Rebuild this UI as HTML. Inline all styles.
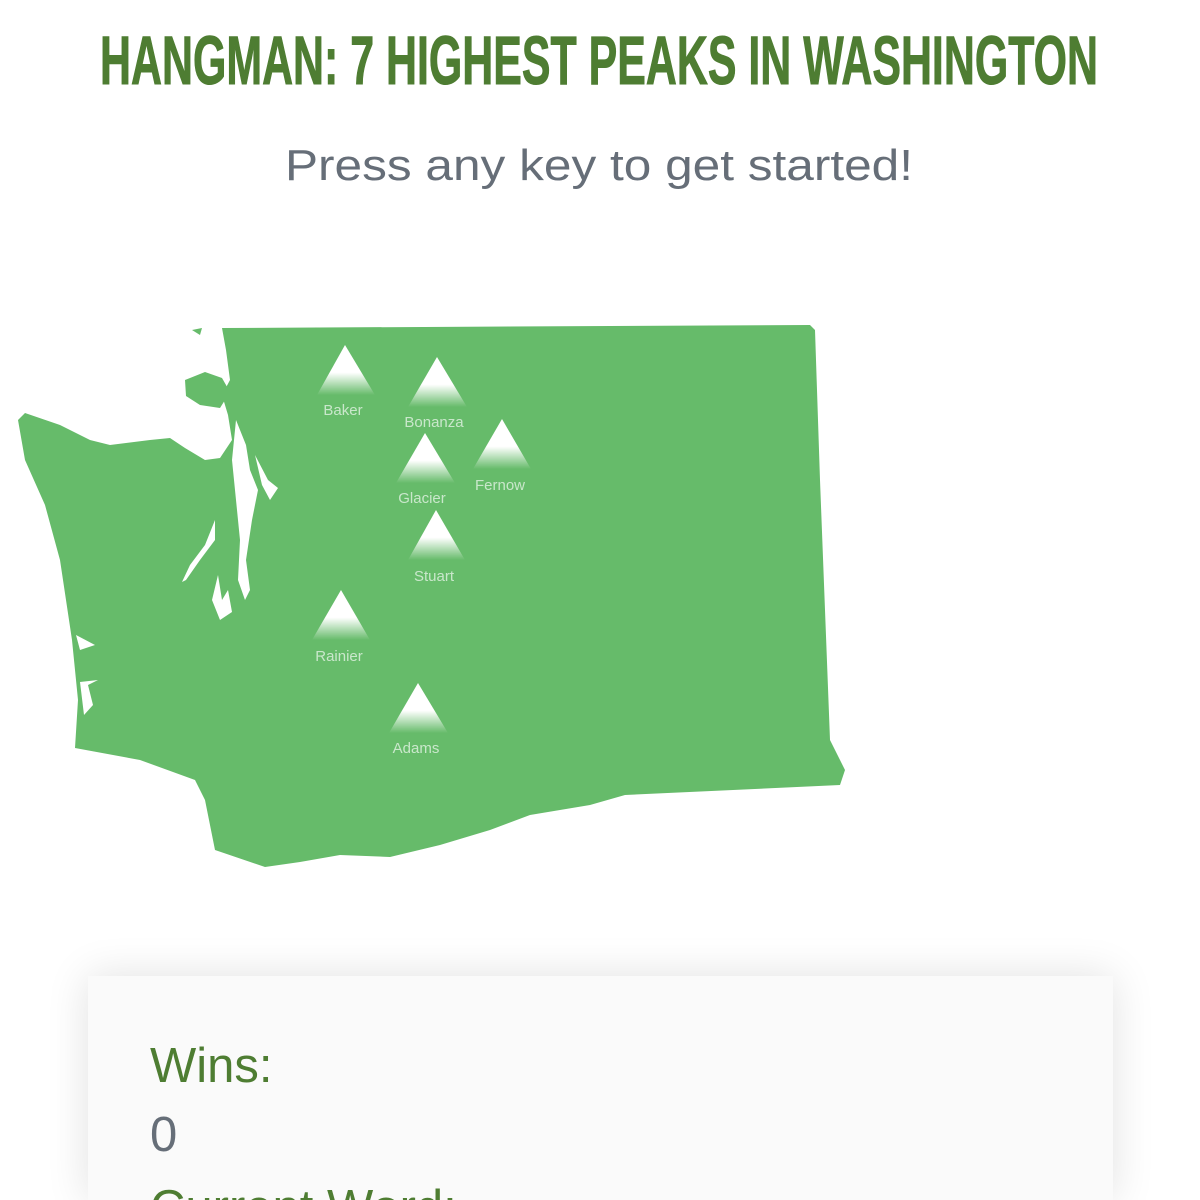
<!DOCTYPE html>
<html><head><meta charset="utf-8"><style>
html,body{margin:0;padding:0;background:#fff;width:1200px;height:1200px;overflow:hidden;font-family:"Liberation Sans",sans-serif;}
.card{position:absolute;left:88px;top:976px;width:1025px;height:224px;background:#fafafa;box-shadow:0 0 40px rgba(0,0,0,0.12);overflow:hidden;}
.t{position:absolute;left:62px;font-size:49px;margin:0;line-height:1;}
</style></head><body>
<svg width="1200" height="960" style="position:absolute;left:0;top:0">
<defs>
<linearGradient id="g" x1="0" y1="0" x2="0" y2="1">
<stop offset="0" stop-color="#fff"/><stop offset="0.55" stop-color="#fff"/><stop offset="1" stop-color="#fff" stop-opacity="0"/>
</linearGradient>
</defs>
<text x="100" y="84" textLength="998" lengthAdjust="spacingAndGlyphs" font-family="Liberation Sans Narrow, Liberation Sans, sans-serif" font-weight="bold" font-size="69" fill="#4e7d32" stroke="#4e7d32" stroke-width="1">HANGMAN: 7 HIGHEST PEAKS IN WASHINGTON</text>
<text x="285" y="180" textLength="628" lengthAdjust="spacingAndGlyphs" font-family="Liberation Sans, sans-serif" font-size="44" fill="#666e78">Press any key to get started!</text>
<path fill="#66bb6a" d="M222,328 L810,325 L815,330 L820,480 L830,740 L845,770 L840,785 L625,795 L590,805 L530,815 L490,830 L440,845 L390,857 L340,855 L300,862 L265,867 L215,850 L205,800 L195,780 L140,760 L75,748 L78,700 L72,640 L60,560 L45,505 L25,460 L18,420 L25,413 L60,425 L90,440 L110,445 L150,440 L170,438 L185,448 L205,460 L220,458 L232,440 L228,415 L222,395 L230,380 L226,350 Z"/>
<path fill="#66bb6a" d="M185,380 L205,372 L222,378 L230,392 L220,408 L200,405 L186,396 Z"/>
<path fill="#66bb6a" d="M192,330 L202,328 L200,335 Z"/>
<path fill="#fff" d="M236,420 L246,445 L250,470 L258,490 L252,520 L246,560 L250,590 L245,600 L238,580 L240,540 L236,500 L232,460 Z"/>
<path fill="#fff" d="M255,455 L268,480 L278,488 L270,500 L262,485 Z"/>
<path fill="#fff" d="M215,520 L205,545 L190,565 L182,582 L186,580 L200,560 L215,540 Z"/>
<path fill="#fff" d="M218,575 L212,600 L220,620 L232,612 L228,590 L222,600 Z"/>
<path fill="#fff" d="M76,635 L80,650 L95,645 Z"/>
<path fill="#fff" d="M80,682 L84,715 L93,705 L88,685 L98,680 Z"/>
<g fill="url(#g)">
<path d="M345,345 L375,395 L317,395 Z"/>
<path d="M437,357 L467,407 L408,407 Z"/>
<path d="M502,419 L531,469 L473,469 Z"/>
<path d="M425,433 L455,483 L396,483 Z"/>
<path d="M436,510 L465,560 L408,560 Z"/>
<path d="M341,590 L370,640 L312,640 Z"/>
<path d="M418,683 L448,733 L389,733 Z"/>
</g>
<g fill="#fff" fill-opacity="0.65" font-family="Liberation Sans, sans-serif" font-size="15" text-anchor="middle">
<text x="343" y="415">Baker</text>
<text x="434" y="427">Bonanza</text>
<text x="500" y="490">Fernow</text>
<text x="422" y="503">Glacier</text>
<text x="434" y="581">Stuart</text>
<text x="339" y="661">Rainier</text>
<text x="416" y="753">Adams</text>
</g>
</svg>
<div class="card">
<div class="t" style="top:66px;color:#4e7d32">Wins:</div>
<div class="t" style="top:135px;color:#666e78">0</div>
<div class="t" style="top:208px;color:#4e7d32">Current Word:</div>
</div>
</body></html>
